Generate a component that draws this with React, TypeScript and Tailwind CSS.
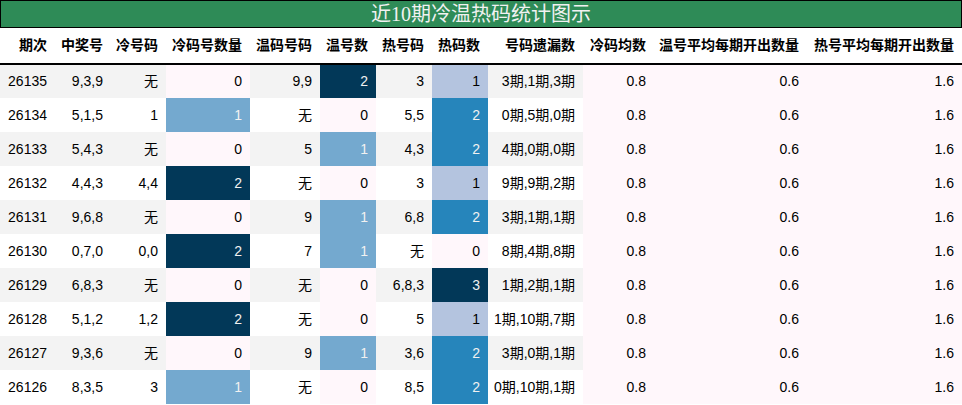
import React from 'react';

type Row = [string, string, string, number, string, number, string, number, string];

const rows: Row[] = [
  ['26135', '9,3,9', '无', 0, '9,9', 2, '3', 1, '3期,1期,3期'],
  ['26134', '5,1,5', '1', 1, '无', 0, '5,5', 2, '0期,5期,0期'],
  ['26133', '5,4,3', '无', 0, '5', 1, '4,3', 2, '4期,0期,0期'],
  ['26132', '4,4,3', '4,4', 2, '无', 0, '3', 1, '9期,9期,2期'],
  ['26131', '9,6,8', '无', 0, '9', 1, '6,8', 2, '3期,1期,1期'],
  ['26130', '0,7,0', '0,0', 2, '7', 1, '无', 0, '8期,4期,8期'],
  ['26129', '6,8,3', '无', 0, '无', 0, '6,8,3', 3, '1期,2期,1期'],
  ['26128', '5,1,2', '1,2', 2, '无', 0, '5', 1, '1期,10期,7期'],
  ['26127', '9,3,6', '无', 0, '9', 1, '3,6', 2, '3期,0期,1期'],
  ['26126', '8,3,5', '3', 1, '无', 0, '8,5', 2, '0期,10期,1期'],
];

const headers = [
  '期次', '中奖号', '冷号码', '冷码号数量', '温码号码', '温号数', '热号码', '热码数',
  '号码遗漏数', '冷码均数', '温号平均每期开出数量', '热号平均每期开出数量',
];

const widths = [55, 56, 55, 84, 70, 56, 56, 56, 95, 71, 153, 155];

// two-step scale for the cold / warm counts, four-step for the hot count
const coldScale: Record<number, string> = {
  0: 'bg-[#fff7fb] text-black',
  1: 'bg-[#74a9cf] text-[#f1f1f1]',
  2: 'bg-[#023858] text-[#f1f1f1]',
};
const hotScale: Record<number, string> = {
  0: 'bg-[#fff7fb] text-black',
  1: 'bg-[#b4c4df] text-black',
  2: 'bg-[#2685bb] text-[#f1f1f1]',
  3: 'bg-[#023858] text-[#f1f1f1]',
};

const cell = 'h-[34px] pr-2 text-right align-middle whitespace-nowrap';
const pink = 'bg-[#fff7fb]';

export default function App() {
  return (
    <div className="w-[962px] bg-white text-black" style={{ fontFamily: '"Liberation Sans", "Noto Sans CJK SC", sans-serif' }}>
      <div
        className="flex h-[28px] items-center justify-center border border-black bg-[#2e8b57] pb-px text-[20px] leading-none text-[#f1f1f1]"
        style={{ fontFamily: '"Liberation Serif", "Noto Sans CJK SC", serif' }}
      >
        近10期冷温热码统计图示
      </div>
      <table className="w-[962px] table-fixed border-collapse text-[14px]">
        <colgroup>
          {widths.map((w, i) => (
            <col key={i} style={{ width: w }} />
          ))}
        </colgroup>
        <thead>
          <tr className="border-b-2 border-black">
            {headers.map(h => (
              <th key={h} className="h-[36px] pr-2 text-right align-middle font-bold whitespace-nowrap">
                {h}
              </th>
            ))}
          </tr>
        </thead>
        <tbody>
          {rows.map((r, i) => (
            <tr key={r[0]} className={i % 2 === 0 ? 'bg-[#f3f3f3]' : 'bg-white'}>
              <td className={cell}>{r[0]}</td>
              <td className={cell}>{r[1]}</td>
              <td className={cell}>{r[2]}</td>
              <td className={`${cell} ${coldScale[r[3]]}`}>{r[3]}</td>
              <td className={cell}>{r[4]}</td>
              <td className={`${cell} ${coldScale[r[5]]}`}>{r[5]}</td>
              <td className={cell}>{r[6]}</td>
              <td className={`${cell} ${hotScale[r[7]]}`}>{r[7]}</td>
              <td className={cell}>{r[8]}</td>
              <td className={`${cell} ${pink}`}>0.8</td>
              <td className={`${cell} ${pink}`}>0.6</td>
              <td className={`${cell} ${pink}`}>1.6</td>
            </tr>
          ))}
        </tbody>
      </table>
    </div>
  );
}
